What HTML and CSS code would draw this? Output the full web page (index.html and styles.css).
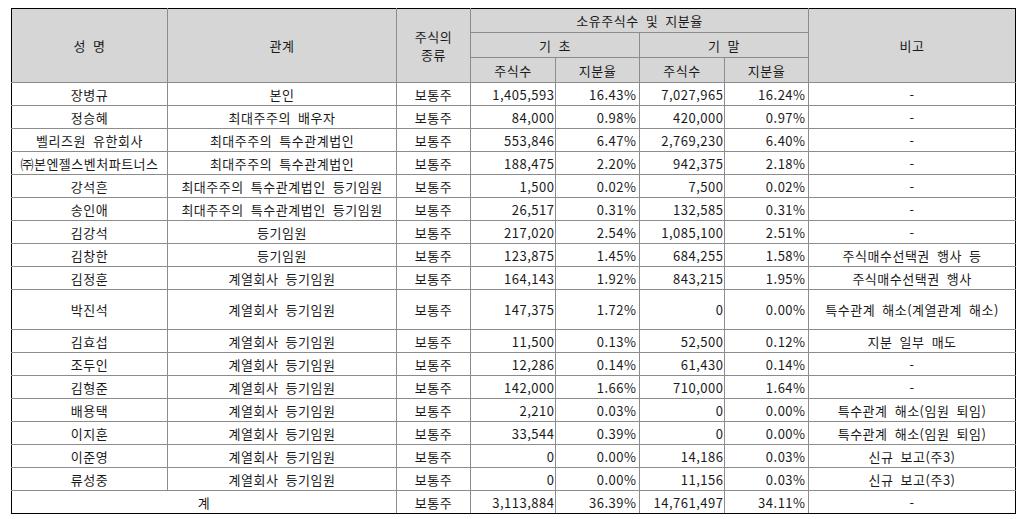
FILE: index.html
```html
<!DOCTYPE html>
<html lang="ko">
<head>
<meta charset="utf-8">
<link rel="stylesheet" href="styles.css">
</head>
<body>
<table class="tbl">
  <colgroup>
    <col class="c-name"><col class="c-rel"><col class="c-kind">
    <col class="c-num"><col class="c-pct"><col class="c-num"><col class="c-pct">
    <col class="c-note">
  </colgroup>
  <thead>
    <tr class="h1">
      <th rowspan="3">성 명</th>
      <th rowspan="3">관계</th>
      <th rowspan="3" class="two">주식의<br>종류</th>
      <th colspan="4">소유주식수 및 지분율</th>
      <th rowspan="3">비고</th>
    </tr>
    <tr class="h2">
      <th colspan="2">기 초</th>
      <th colspan="2">기 말</th>
    </tr>
    <tr class="h3">
      <th>주식수</th><th>지분율</th><th>주식수</th><th>지분율</th>
    </tr>
  </thead>
  <tbody>
    <tr><td>장병규</td><td>본인</td><td>보통주</td><td class="n">1,405,593</td><td class="p">16.43%</td><td class="n">7,027,965</td><td class="p">16.24%</td><td>-</td></tr>
    <tr><td>정승혜</td><td>최대주주의 배우자</td><td>보통주</td><td class="n">84,000</td><td class="p">0.98%</td><td class="n">420,000</td><td class="p">0.97%</td><td>-</td></tr>
    <tr><td>벨리즈원 유한회사</td><td>최대주주의 특수관계법인</td><td>보통주</td><td class="n">553,846</td><td class="p">6.47%</td><td class="n">2,769,230</td><td class="p">6.40%</td><td>-</td></tr>
    <tr><td>㈜본엔젤스벤처파트너스</td><td>최대주주의 특수관계법인</td><td>보통주</td><td class="n">188,475</td><td class="p">2.20%</td><td class="n">942,375</td><td class="p">2.18%</td><td>-</td></tr>
    <tr><td>강석흔</td><td>최대주주의 특수관계법인 등기임원</td><td>보통주</td><td class="n">1,500</td><td class="p">0.02%</td><td class="n">7,500</td><td class="p">0.02%</td><td>-</td></tr>
    <tr><td>송인애</td><td>최대주주의 특수관계법인 등기임원</td><td>보통주</td><td class="n">26,517</td><td class="p">0.31%</td><td class="n">132,585</td><td class="p">0.31%</td><td>-</td></tr>
    <tr><td>김강석</td><td>등기임원</td><td>보통주</td><td class="n">217,020</td><td class="p">2.54%</td><td class="n">1,085,100</td><td class="p">2.51%</td><td>-</td></tr>
    <tr><td>김창한</td><td>등기임원</td><td>보통주</td><td class="n">123,875</td><td class="p">1.45%</td><td class="n">684,255</td><td class="p">1.58%</td><td>주식매수선택권 행사 등</td></tr>
    <tr><td>김정훈</td><td>계열회사 등기임원</td><td>보통주</td><td class="n">164,143</td><td class="p">1.92%</td><td class="n">843,215</td><td class="p">1.95%</td><td>주식매수선택권 행사</td></tr>
    <tr class="tall"><td>박진석</td><td>계열회사 등기임원</td><td>보통주</td><td class="n">147,375</td><td class="p">1.72%</td><td class="n">0</td><td class="p">0.00%</td><td>특수관계 해소(계열관계 해소)</td></tr>
    <tr><td>김효섭</td><td>계열회사 등기임원</td><td>보통주</td><td class="n">11,500</td><td class="p">0.13%</td><td class="n">52,500</td><td class="p">0.12%</td><td>지분 일부 매도</td></tr>
    <tr><td>조두인</td><td>계열회사 등기임원</td><td>보통주</td><td class="n">12,286</td><td class="p">0.14%</td><td class="n">61,430</td><td class="p">0.14%</td><td>-</td></tr>
    <tr><td>김형준</td><td>계열회사 등기임원</td><td>보통주</td><td class="n">142,000</td><td class="p">1.66%</td><td class="n">710,000</td><td class="p">1.64%</td><td>-</td></tr>
    <tr><td>배용택</td><td>계열회사 등기임원</td><td>보통주</td><td class="n">2,210</td><td class="p">0.03%</td><td class="n">0</td><td class="p">0.00%</td><td>특수관계 해소(임원 퇴임)</td></tr>
    <tr><td>이지훈</td><td>계열회사 등기임원</td><td>보통주</td><td class="n">33,544</td><td class="p">0.39%</td><td class="n">0</td><td class="p">0.00%</td><td>특수관계 해소(임원 퇴임)</td></tr>
    <tr><td>이준영</td><td>계열회사 등기임원</td><td>보통주</td><td class="n">0</td><td class="p">0.00%</td><td class="n">14,186</td><td class="p">0.03%</td><td>신규 보고(주3)</td></tr>
    <tr><td>류성중</td><td>계열회사 등기임원</td><td>보통주</td><td class="n">0</td><td class="p">0.00%</td><td class="n">11,156</td><td class="p">0.03%</td><td>신규 보고(주3)</td></tr>
    <tr><td colspan="2">계</td><td>보통주</td><td class="n">3,113,884</td><td class="p">36.39%</td><td class="n">14,761,497</td><td class="p">34.11%</td><td>-</td></tr>
  </tbody>
</table>
</body>
</html>
```

FILE: styles.css
```css
html, body {
  margin: 0;
  padding: 0;
  background: #ffffff;
}
body {
  padding: 8px 0 0 11px;
  font-family: "Noto Sans CJK KR", "Noto Sans", sans-serif;
  font-size: 13px;
  color: #1a1a1a;
}
.tbl {
  border-collapse: collapse;
  table-layout: fixed;
  width: 1004px;
  border: 1px solid #000;
}
.c-name { width: 156px; }
.c-rel { width: 229px; }
.c-kind { width: 74px; }
.c-num { width: 85px; }
.c-pct { width: 84px; }
.c-note { width: 207px; }
.tbl th, .tbl td {
  border: 1px solid #8c8c8c;
  padding: 0 2px;
  text-align: center;
  vertical-align: middle;
  white-space: nowrap;
  line-height: 15px;
  font-weight: normal;
  letter-spacing: 0.5px;
  word-spacing: 3px;
}
.tbl th {
  background: #d6d6d6;
}
.tbl th.two { line-height: 18px; }
.tbl tr:first-child th { border-top-color: #000; }
.tbl tr th:first-child, .tbl tr td:first-child { border-left-color: #000; }
.tbl tr th:last-child, .tbl tr td:last-child { border-right-color: #000; }
.tbl .h2 th:last-child, .tbl .h3 th:last-child { border-right-color: #8c8c8c; }
.tbl tbody tr:last-child td { border-bottom-color: #000; }
.h1 { height: 24px; }
.h2 { height: 25px; }
.h3 { height: 25px; }
.tbl tbody tr { height: 23px; }
.tbl tbody tr.tall { height: 40px; }
.tbl td.n { text-align: right; padding-right: 0.5px; }
.tbl td.p { text-align: right; padding-right: 2.5px; }
```
